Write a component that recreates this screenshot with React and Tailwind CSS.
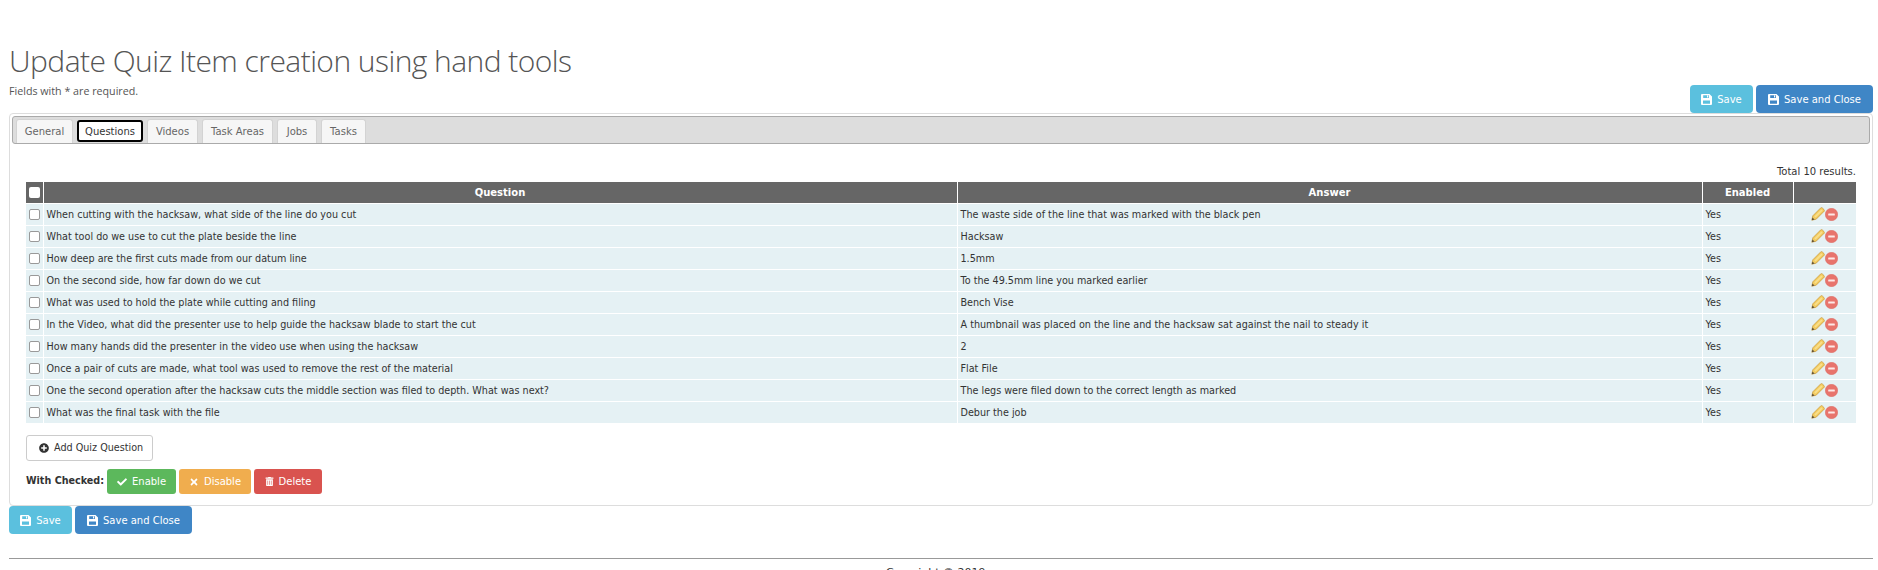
import React from 'react';
import { FaCheck, FaTimes, FaTrashAlt, FaPlusCircle } from 'react-icons/fa';

const tabs = [
  { name: 'General', width: 'w-[57px]' },
  { name: 'Questions', width: 'w-[66px]', active: true },
  { name: 'Videos', width: 'w-[51px]' },
  { name: 'Task Areas', width: 'w-[71px]' },
  { name: 'Jobs', width: 'w-[40px]' },
  { name: 'Tasks', width: 'w-[45px]' },
];

const rows = [
  ['When cutting with the hacksaw, what side of the line do you cut', 'The waste side of the line that was marked with the black pen'],
  ['What tool do we use to cut the plate beside the line', 'Hacksaw'],
  ['How deep are the first cuts made from our datum line', '1.5mm'],
  ['On the second side, how far down do we cut', 'To the 49.5mm line you marked earlier'],
  ['What was used to hold the plate while cutting and filing', 'Bench Vise'],
  ['In the Video, what did the presenter use to help guide the hacksaw blade to start the cut', 'A thumbnail was placed on the line and the hacksaw sat against the nail to steady it'],
  ['How many hands did the presenter in the video use when using the hacksaw', '2'],
  ['Once a pair of cuts are made, what tool was used to remove the rest of the material', 'Flat File'],
  ['One the second operation after the hacksaw cuts the middle section was filed to depth. What was next?', 'The legs were filed down to the correct length as marked'],
  ['What was the final task with the file', 'Debur the job'],
];

const PencilIcon = () => (
  <svg width="14" height="14" viewBox="0 0 14 14">
    <path d="M0.8 13.2 L1.8 8.8 L9.8 0.8 Q10.6 0.4 11.4 1 L13 2.6 Q13.6 3.4 13.2 4.2 L5.2 12.2 Z" fill="#f3cd62" stroke="#c8963a" strokeWidth="0.7" />
    <path d="M3.4 9.4 L10.4 2.4 L11.6 3.6 L4.6 10.6 Z" fill="#f9e08e" />
    <path d="M0.8 13.2 L1.4 10.4 L3.6 12.6 Z" fill="#5f5238" />
  </svg>
);

const RemoveIcon = () => (
  <svg width="13" height="13" viewBox="0 0 13 13">
    <circle cx="6.5" cy="6.5" r="6.2" fill="#e8746c" stroke="#dc6a63" strokeWidth="0.5" />
    <rect x="3.2" y="5.5" width="6.6" height="2" rx="0.5" fill="#fde8e6" />
  </svg>
);

const SaveIcon = () => (
  <svg width="11" height="11" viewBox="0 0 11 11" fill="currentColor">
    <path fillRule="evenodd" d="M0 1 Q0 0 1 0 H8.5 L11 2.5 V10 Q11 11 10 11 H1 Q0 11 0 10 Z M2.2 1.2 V4 H8 V1.2 Z M6 1.6 H7.2 V3.6 H6 Z M2 6.4 V9.8 H9 V6.4 Z" />
  </svg>
);

const SaveButtons = () => (
  <div className="flex gap-[3px]">
    <button className="flex items-center justify-center gap-[5px] w-[63px] h-[28px] rounded-[4px] bg-[#5bc0de] text-white">
      <SaveIcon />
      <span>Save</span>
    </button>
    <button className="flex items-center justify-center gap-[5px] w-[117px] h-[28px] rounded-[4px] bg-[#3f86c6] text-white">
      <SaveIcon />
      <span>Save and Close</span>
    </button>
  </div>
);

export default function App() {
  return (
    <div className="h-[570px] overflow-hidden bg-white pl-[9px] pr-[5px] font-['DejaVu_Sans',sans-serif] text-[10px] text-[#333]">
      <div className="flex items-end justify-between h-[113px]">
        <div className="pb-[14px]">
          <h1 className="font-['Open_Sans',sans-serif] font-light text-[30px] tracking-[-0.55px] leading-[44px] text-[#555]">
            Update Quiz Item creation using hand tools
          </h1>
          <p className="font-['Open_Sans',sans-serif] text-[10.7px] leading-[16px] text-[#555]">Fields with * are required.</p>
        </div>
        <SaveButtons />
      </div>

      <div className="h-[393px] border border-[#ddd] rounded-[4px] px-[2px] pt-[2px]">
        <div className="flex gap-[4px] h-[28px] pl-[3px] pt-[2px] bg-[#ddd] border border-[#aaa] rounded-[3px]">
          {tabs.map((tab) =>
            tab.active ? (
              <div key={tab.name} className={`${tab.width} h-[22px] mt-[1px] flex items-center justify-center bg-white border-2 border-black rounded-[3px] text-[#333]`}>
                {tab.name}
              </div>
            ) : (
              <div key={tab.name} className={`${tab.width} h-[24px] flex items-center justify-center bg-[#f6f6f6] border border-b-0 border-[#d3d3d3] rounded-t-[3px] text-[#666]`}>
                {tab.name}
              </div>
            )
          )}
        </div>

        <div className="ml-[14px] w-[1830px]">
          <div className="h-[38px] pt-[21px] text-right leading-[14px]">Total 10 results.</div>
          <table className="table-fixed w-full border-collapse">
            <colgroup>
              <col className="w-[17px]" />
              <col className="w-[914px]" />
              <col className="w-[745px]" />
              <col className="w-[91px]" />
              <col />
            </colgroup>
            <thead>
              <tr className="h-[21px] bg-[#666] text-white font-bold">
                <th className="border-r border-white">
                  <span className="block w-[11px] h-[11px] mx-auto rounded-[2px] bg-white" />
                </th>
                <th className="border-r border-white">Question</th>
                <th className="border-r border-white">Answer</th>
                <th className="border-r border-white">Enabled</th>
                <th></th>
              </tr>
            </thead>
            <tbody className="text-[9.65px]">
              {rows.map(([question, answer]) => (
                <tr key={question} className="h-[22px] bg-[#e5f1f4] border-t border-white">
                  <td className="border-r border-white">
                    <span className="block w-[11px] h-[11px] mx-auto rounded-[2px] bg-white border border-[#999]" />
                  </td>
                  <td className="px-[3px] pt-[2px] border-r border-white">{question}</td>
                  <td className="px-[3px] pt-[2px] border-r border-white">{answer}</td>
                  <td className="px-[3px] pt-[2px] border-r border-white">Yes</td>
                  <td>
                    <div className="flex items-center justify-center">
                      <PencilIcon />
                      <RemoveIcon />
                    </div>
                  </td>
                </tr>
              ))}
            </tbody>
          </table>

          <button className="flex items-center gap-[5px] mt-[12px] w-[127px] h-[26px] pl-[12px] bg-white border border-[#ccc] rounded-[3px] text-[9.65px] text-[#333]">
            <FaPlusCircle className="w-[10px] h-[10px]" />
            <span>Add Quiz Question</span>
          </button>

          <div className="flex items-center gap-[3px] mt-[8px] text-white">
            <b className="text-[#333] text-[9.6px] w-[78px] shrink-0 whitespace-nowrap">With Checked:</b>
            <button className="flex items-center justify-center gap-[5px] w-[69px] h-[25px] rounded-[3px] bg-[#5cb85c]">
              <FaCheck className="w-[10px] h-[10px]" /> Enable
            </button>
            <button className="flex items-center justify-center gap-[5px] w-[72px] h-[25px] rounded-[3px] bg-[#f0ad4e]">
              <FaTimes className="w-[10px] h-[10px]" /> Disable
            </button>
            <button className="flex items-center justify-center gap-[5px] w-[68px] h-[25px] rounded-[3px] bg-[#d9534f]">
              <FaTrashAlt className="w-[9px] h-[9px]" /> Delete
            </button>
          </div>
        </div>
      </div>

      <SaveButtons />

      <div className="mt-[24px] border-t border-[#999] pt-[7px] text-center text-[11px] leading-[14px]">
        Copyright © 2019...
      </div>
    </div>
  );
}
